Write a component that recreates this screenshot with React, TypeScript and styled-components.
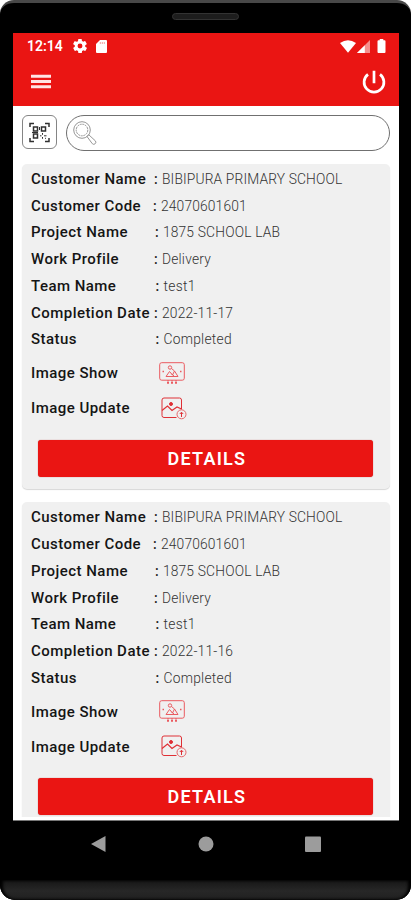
import React from "react";
import styled, { createGlobalStyle } from "styled-components";

const Global = createGlobalStyle`
  *, *::before, *::after { box-sizing: border-box; }
  body { margin: 0; background: #fff; font-family: Roboto, "Liberation Sans", sans-serif; }
`;

const Phone = styled.div`
  width: 411px;
  height: 900px;
  background: #000;
  border-radius: 14px 14px 15px 15px;
  border-top: 3px solid #484848;
  overflow: hidden;
  display: flex;
  flex-direction: column;
`;

const Earpiece = styled.div`
  height: 30px;
  flex: none;
  padding-top: 10px;
  display: flex;
  justify-content: center;

  &::before {
    content: "";
    width: 67px;
    height: 7px;
    border-radius: 4px;
    background: #1d1d1d;
    border: 1px solid #333;
  }
`;

const Screen = styled.main`
  height: 788px;
  flex: none;
  margin: 0 12px 0 13px;
  background: #fff;
  overflow: hidden;
  display: flex;
  flex-direction: column;
  border-bottom: 1px solid #777;
`;

const Header = styled.header`
  height: 73px;
  flex: none;
  background: #ea1513;
  color: #fff;
`;

const StatusBar = styled.div`
  height: 26px;
  padding: 0 13px 0 14px;
  display: flex;
  align-items: center;
`;

const Clock = styled.span`
  width: 46px;
  font-size: 14px;
  font-weight: 600;
  letter-spacing: 0px;
`;

const Icon = styled.svg<{ $w: number; $h: number; $left?: number }>`
  display: block;
  flex: none;
  width: ${(p) => p.$w}px;
  height: ${(p) => p.$h}px;
  margin-left: ${(p) => p.$left ?? 0}px;
`;

const Spacer = styled.div`
  flex: 1;
`;

const AppBar = styled.div`
  height: 45px;
  padding: 0 13px 0 18px;
  display: flex;
  align-items: center;
  justify-content: space-between;
`;

const SearchRow = styled.div`
  padding: 9px 9px 0;
  display: flex;
  gap: 9px;
  flex: none;
`;

const ScanButton = styled.div`
  width: 35px;
  height: 34px;
  border: 1px solid #858585;
  border-radius: 6px;
  display: flex;
  align-items: center;
  justify-content: center;
`;

const SearchBox = styled.div`
  flex: 1;
  height: 36px;
  border: 1px solid #707070;
  border-radius: 18px;
  padding: 5px 0 0 6px;
`;

const CardList = styled.section`
  flex: 1;
  min-height: 0;
  margin-bottom: 3px;
  overflow: hidden;
  padding: 13px 9px 0;
  display: flex;
  flex-direction: column;
  gap: 13.3px;
`;

const Card = styled.article`
  height: 325px;
  flex: none;
  background: #f0f0f0;
  border-radius: 5px;
  box-shadow: 0 1px 1px #d8d8d8;
  padding: 1.6px 17px 0 9px;
`;

const Row = styled.div<{ $h?: number }>`
  height: ${(p) => p.$h ?? 26.75}px;
  display: flex;
  align-items: center;
  white-space: nowrap;
`;

const Label = styled.span`
  width: 123px;
  flex: none;
  font-size: 15px;
  font-weight: 550;
  color: #151515;
  letter-spacing: 0.46px;
`;

const Value = styled.span<{ $indent: number; $spacing: number }>`
  margin-left: ${(p) => p.$indent}px;
  font-size: 13.8px;
  font-weight: 300;
  color: #333;
  letter-spacing: ${(p) => p.$spacing}px;
  display: flex;
  align-items: center;
`;

const Colon = styled.span`
  width: 8px;
  font-size: 14px;
  font-weight: 500;
  color: #222;
`;

const DetailsButton = styled.button`
  display: block;
  width: 335px;
  height: 37px;
  margin: 16.9px 0 0 7.4px;
  border: 0;
  border-radius: 3px;
  background: #ea1513;
  box-shadow: 0 0 1px #b34a48;
  color: #fff;
  font: 600 18px/38px Roboto, "Liberation Sans", sans-serif;
  letter-spacing: 1.25px;
  padding: 0 0 0 2px;
`;

const NavBar = styled.nav`
  flex: none;
  height: 59px;
  padding: 13px 90px 0;
  display: flex;
  justify-content: space-between;
  align-items: flex-start;
`;

const Chin = styled.div`
  flex: 1;
  background: linear-gradient(#161616, #272727 55%, #202020);
  border-radius: 0 0 14px 14px;
  box-shadow: inset 3px 0 3px #000, inset -3px 0 3px #000;
`;

const GearIcon = () => (
  <Icon $w={14} $h={14} viewBox="2 2 20 20" fill="#fff">
    <path d="M19.4 13a7.500 7.500 0 0 0 0-2l2.100-1.650a.5.5 0 0 0 .1-.64l-2-3.460a.5.5 0 0 0-.6-.22l-2.500 1a7.300 7.300 0 0 0-1.700-1L14.450 2.400A.5.5 0 0 0 14 2h-4a.5.5 0 0 0-.5.42L9.100 5.070a7.700 7.700 0 0 0-1.700.98l-2.500-1a.5.5 0 0 0-.6.22l-2 3.460a.5.5 0 0 0 .1.64L4.600 11a7.900 7.900 0 0 0 0 2l-2.100 1.650a.5.5 0 0 0-.1.640l2 3.460a.5.5 0 0 0 .6.220l2.500-1a7.300 7.300 0 0 0 1.700 1l.4 2.650a.5.5 0 0 0 .5.420h4a.5.5 0 0 0 .5-.42l.4-2.650a7.700 7.700 0 0 0 1.700-.98l2.500 1a.5.5 0 0 0 .6-.22l2-3.460a.5.5 0 0 0-.1-.64zM12 15.500a3.500 3.500 0 1 1 0-7 3.500 3.500 0 0 1 0 7z" />
  </Icon>
);

const SdCardIcon = () => (
  <Icon $w={11} $h={13} $left={9} viewBox="0 0 11 13">
    <path d="M4 0h6a1 1 0 0 1 1 1v11a1 1 0 0 1-1 1H1a1 1 0 0 1-1-1V4z" fill="#fff" />
    <path d="M4.300 2v2M6.300 2v2M8.300 2v2" stroke="#f3a09f" strokeWidth="1" />
  </Icon>
);

const WifiIcon = () => (
  <Icon $w={16} $h={13} viewBox="0 0 16 13">
    <path d="M0 3Q8-2.500 16 3L8 12.800z" fill="#fff" />
  </Icon>
);

const SignalIcon = () => (
  <Icon $w={13} $h={13} $left={1} viewBox="0 0 13 13">
    <path d="M13 0v13H0z" fill="#f58f8e" />
    <path d="M7.800 5.200V13H0z" fill="#fff" />
  </Icon>
);

const BatteryIcon = () => (
  <Icon $w={9} $h={14} $left={7} viewBox="0 0 8 14">
    <path d="M2.200 0h3.600v1.200H7a1 1 0 0 1 1 1V13a1 1 0 0 1-1 1H1a1 1 0 0 1-1-1V2.200a1 1 0 0 1 1-1h1.200z" fill="#fff" />
  </Icon>
);

const MenuIcon = () => (
  <Icon $w={20} $h={15} viewBox="0 0 20 15" stroke="#ffe4e4" strokeWidth="3">
    <path d="M0 2.200h20M0 7.500h20M0 12.800h20" />
  </Icon>
);

const PowerIcon = () => (
  <Icon $w={24} $h={24} viewBox="0 0 24 24" fill="none" stroke="#fff" strokeWidth="2.7">
    <path d="M12 .8v12.500M6 4.400a9.900 9.900 0 1 0 12 0" />
  </Icon>
);

const ScanIcon = () => (
  <Icon $w={21} $h={21} viewBox="0 0 21 21" fill="none" stroke="#303030" strokeWidth="1.5">
    <path d="M1 5V1.500h4M16 1.500h4V5M1 16v3.500h4M16 19.500h4V16" />
    <path d="M4.500 5h4v4h-4zM12.500 5h4v4h-4zM4.500 12h4v4h-4z" />
    <path d="M10.500 5v3M13.500 11v1.800M13.500 15v1.800M11 13.800h1.500M15 13.800h2.500M16.500 15.800v1M3 10.500h6" strokeWidth="1" />
  </Icon>
);

const MagnifierIcon = () => (
  <Icon $w={24} $h={24} viewBox="0 0 24 24" fill="none" stroke="#969696" strokeWidth="1">
    <circle cx="9" cy="9" r="8.3" />
    <circle cx="9" cy="9" r="5.8" strokeDasharray="2 .7" />
    <path d="M14 15.500l1.700-1.800 6.500 6a2 2 0 0 1-2.900 3z" />
  </Icon>
);

const ImageShowIcon = () => (
  <Icon $w={26} $h={23} $left={5} viewBox="0 0 26 23" fill="none" stroke="#ea5b60" strokeWidth="1">
    <rect x=".7" y=".7" width="24.600" height="17.500" rx="2" />
    <path d="M7 14.500l3.500-5 3 3.500L15.500 9l3.500 5.500zM12.500 12L15 14" />
    <circle cx="11" cy="5.500" r="1.700" />
    <path d="M12.500 6.500l3 2.500" />
    <path d="M3.500 9.500h1.500M21 9.500h1.500" strokeWidth="1.500" />
    <path d="M9 18v1.500M13 18v1.500M17 18v1.500" />
    <path d="M8 20.800h2M12 20.800h2M16 20.800h2" strokeWidth="2" />
  </Icon>
);

const ImageUpdateIcon = () => (
  <Icon $w={26} $h={23} $left={7} viewBox="0 0 26 23" fill="none" stroke="#df3036" strokeWidth="1">
    <path d="M15.500 20.500H3a2 2 0 0 1-2-2V3a2 2 0 0 1 2-2h15.500a2 2 0 0 1 2 2v9.500" />
    <path d="M1 13.500l5.500-4.500 4.500 4.500 5-3.500 4.500 2" strokeWidth="1.200" />
    <circle cx="10" cy="7" r="1.500" fill="#df3036" />
    <circle cx="20.500" cy="17.300" r="4.500" stroke="#e66669" />
    <path d="M20.500 20v-4.500M18.800 17L20.500 15.200l1.700 1.800" />
  </Icon>
);

interface Field {
  label: string;
  value: string;
  indent: number;
  valueSpacing: number;
}

const fieldsFor = (date: string): Field[] => [
  { label: "Customer Name", value: "BIBIPURA PRIMARY SCHOOL", indent: 0, valueSpacing: 0.14 },
  { label: "Customer Code", value: "24070601601", indent: -1, valueSpacing: 0.15 },
  { label: "Project Name", value: "1875 SCHOOL LAB", indent: 0.9, valueSpacing: 0.17 },
  { label: "Work Profile", value: "Delivery", indent: 0, valueSpacing: 0.2 },
  { label: "Team Name", value: "test1", indent: 1.5, valueSpacing: 0.3 },
  { label: "Completion Date", value: date, indent: 0, valueSpacing: 0.2 },
  { label: "Status", value: "Completed", indent: 1.5, valueSpacing: 0.25 },
];

const WorkCard = ({ date }: { date: string }) => (
  <Card>
    {fieldsFor(date).map((f) => (
      <Row key={f.label}>
        <Label>{f.label}</Label>
        <Value $indent={f.indent} $spacing={f.valueSpacing}>
          <Colon>:</Colon>
          {f.value}
        </Value>
      </Row>
    ))}
    <Row $h={41}>
      <Label>Image Show</Label>
      <ImageShowIcon />
    </Row>
    <Row $h={29}>
      <Label>Image Update</Label>
      <ImageUpdateIcon />
    </Row>
    <DetailsButton>DETAILS</DetailsButton>
  </Card>
);

export default function App() {
  return (
    <>
      <Global />
      <Phone>
        <Earpiece />
        <Screen>
          <Header>
            <StatusBar>
              <Clock>12:14</Clock>
              <GearIcon />
              <SdCardIcon />
              <Spacer />
              <WifiIcon />
              <SignalIcon />
              <BatteryIcon />
            </StatusBar>
            <AppBar>
              <MenuIcon />
              <PowerIcon />
            </AppBar>
          </Header>
          <SearchRow>
            <ScanButton>
              <ScanIcon />
            </ScanButton>
            <SearchBox>
              <MagnifierIcon />
            </SearchBox>
          </SearchRow>
          <CardList>
            <WorkCard date="2022-11-17" />
            <WorkCard date="2022-11-16" />
          </CardList>
        </Screen>
        <NavBar>
          <Icon $w={16} $h={20} viewBox="0 0 16 20">
            <path d="M1 10L15.500 2v16z" fill="#9c9c9c" />
          </Icon>
          <Icon $w={16} $h={20} viewBox="0 0 16 20">
            <circle cx="8" cy="10" r="7.500" fill="#9c9c9c" />
          </Icon>
          <Icon $w={16} $h={20} viewBox="0 0 16 20">
            <rect x="0" y="2.500" width="16" height="15.500" rx="1" fill="#9c9c9c" />
          </Icon>
        </NavBar>
        <Chin />
      </Phone>
    </>
  );
}
